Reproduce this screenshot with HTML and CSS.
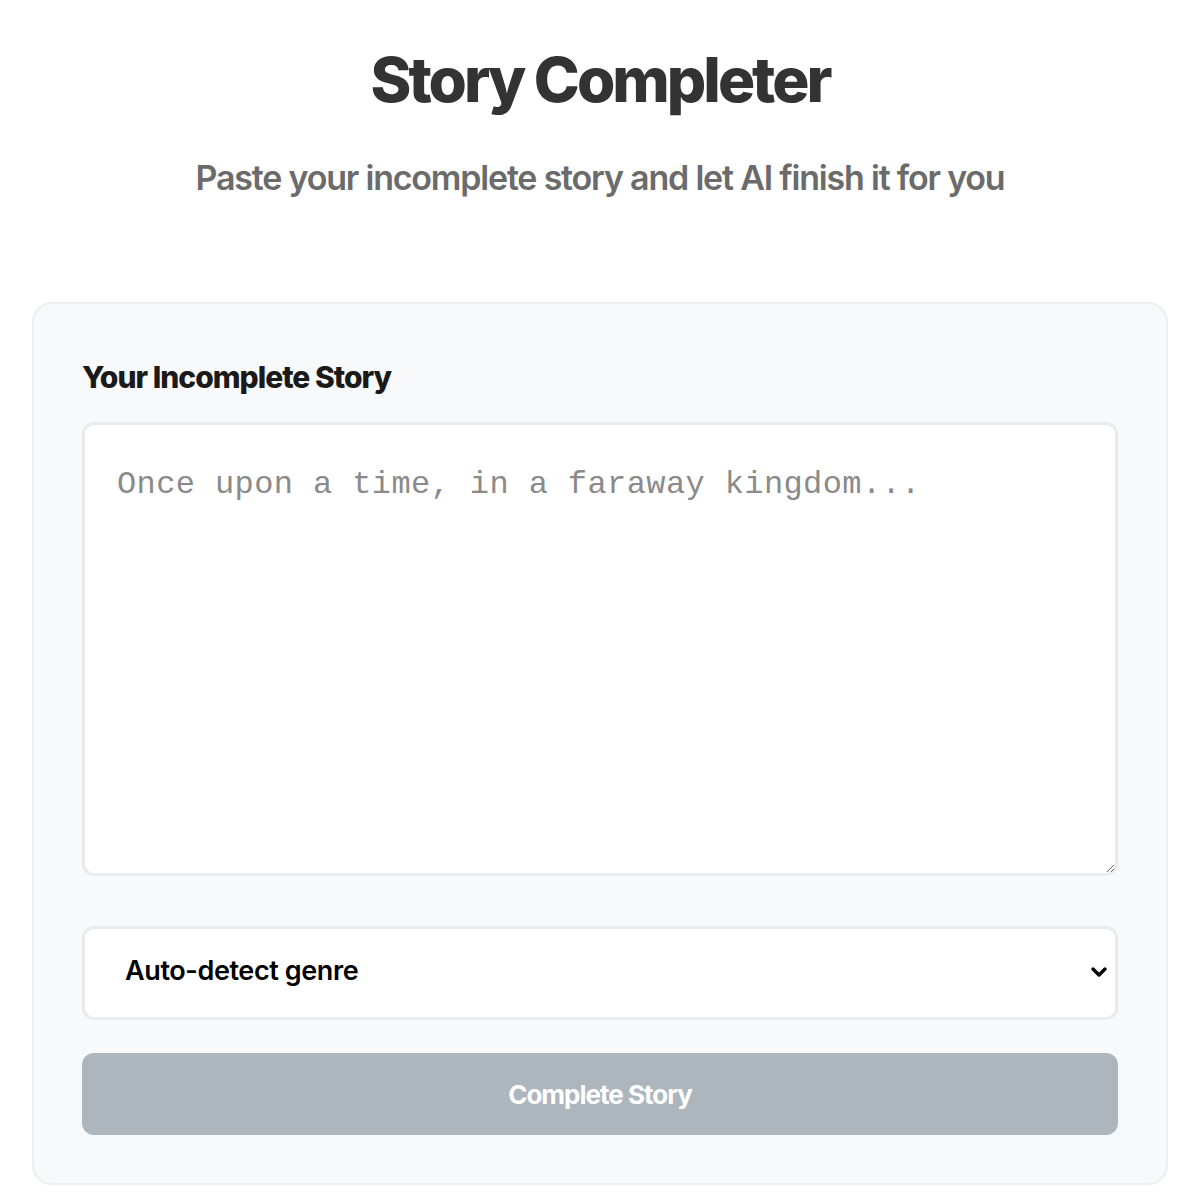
FILE: index.html
```html
<!DOCTYPE html>
<html>
	<head>
		<meta charset="UTF-8">
		<title>Story Completer</title>
		<link rel="stylesheet" href="styles.css">
	</head>
	<body>
		<div class="page">
			<header class="head">
				<h1 class="title">Story Completer</h1>
				<p class="subtitle">Paste your incomplete story and let AI finish it for you</p>
			</header>
			<div class="card">
				<label class="label" for="story">Your Incomplete Story</label>
				<textarea id="story" class="story" placeholder="Once upon a time, in a faraway kingdom..."></textarea>
				<div class="select-wrap">
					<select class="genre">
						<option>Auto-detect genre</option>
						<option>Fantasy</option>
						<option>Mystery</option>
						<option>Romance</option>
						<option>Sci-Fi</option>
					</select>
					<svg class="chev" width="18" height="12" viewBox="0 0 18 12"><path d="M3 3l6 6 6-6" fill="none" stroke="#000" stroke-width="3.4" stroke-linecap="round" stroke-linejoin="round"/></svg>
				</div>
				<button class="go" disabled>Complete Story</button>
			</div>
		</div>
	</body>
</html>
```

FILE: styles.css
```css
body{
	margin:0;
	background:#fff;
	font-family:Inter, "Noto Sans", sans-serif;
}
.page{
	padding:0 32px;
}
.head{
	text-align:center;
	padding-top:42px;
}
.title{
	margin:0;
	font-size:62px;
	font-weight:800;
	letter-spacing:-3px;
	color:#333;
	line-height:76px;
}
.subtitle{
	margin:40px 0 0;
	font-size:34px;
	font-weight:600;
	letter-spacing:-1.2px;
	color:#6b6b6b;
	line-height:40px;
}
.card{
	margin-top:104px;
	background:#f8f9fa;
	border:2px solid #eceef0;
	border-radius:20px;
	padding:48px 48px 48px;
	display:flex;
	flex-direction:column;
}
.label{
	font-size:30px;
	font-weight:800;
	letter-spacing:-1px;
	color:#1a1a1a;
	line-height:40px;
	margin-top:5px;
}
.story{
	margin-top:25px;
	height:454px;
	box-sizing:border-box;
	border:3px solid #e9ecef;
	border-radius:12px;
	background:#fff;
	padding:40px 32px;
	font-family:"Liberation Mono", "DejaVu Sans Mono", monospace;
	font-size:32px;
	line-height:40px;
	letter-spacing:0.4px;
	resize:vertical;
	outline:none;
}
.story::placeholder{
	color:#8a8a8a;
}
.select-wrap{
	position:relative;
	margin-top:50px;
}
.genre{
	width:100%;
	height:94px;
	box-sizing:border-box;
	border:3px solid #e9ecef;
	border-radius:12px;
	background:#fff;
	padding:0 40px 6px;
	font-family:Inter, "Noto Sans", sans-serif;
	font-size:27px;
	font-weight:600;
	letter-spacing:-0.4px;
	color:#000;
	-webkit-appearance:none;
	appearance:none;
	outline:none;
}
.chev{
	position:absolute;
	right:10px;
	top:40px;
	pointer-events:none;
}
.go{
	margin-top:33px;
	height:82px;
	border:0;
	border-radius:12px;
	background:#adb5bd;
	color:#fff;
	font-family:Inter, "Noto Sans", sans-serif;
	font-size:26px;
	font-weight:700;
	letter-spacing:-1px;
}
```
